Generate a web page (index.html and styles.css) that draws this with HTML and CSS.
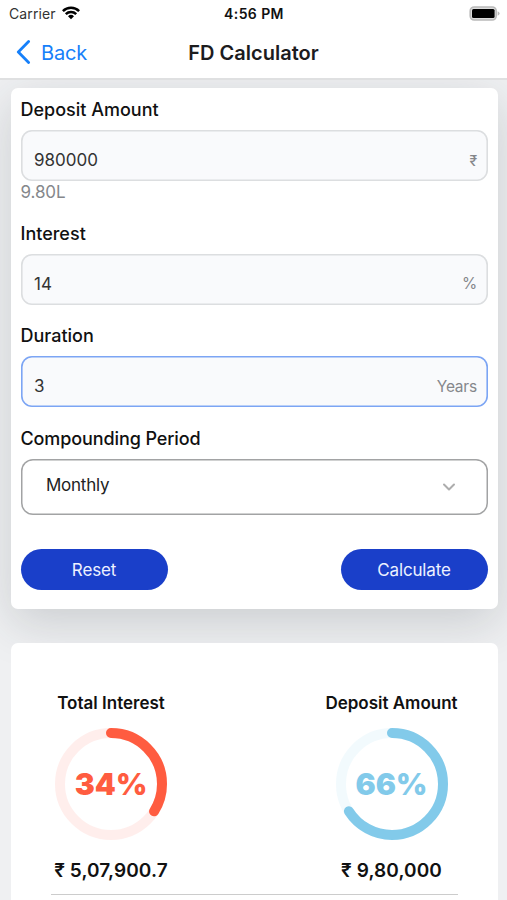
FILE: index.html
```html
<!DOCTYPE html>
<html lang="en">
<head>
<meta charset="utf-8">
<title>FD Calculator</title>
<link rel="stylesheet" href="styles.css">
</head>
<body>
<header class="top">
  <div class="status">
    <span class="carrier">Carrier
      <svg class="wifi" width="18" height="14" viewBox="0 0 18 14"><g fill="none" stroke="#000" stroke-width="2.5"><path d="M.9 5.1a11.5 11.5 0 0 1 16.2 0"/><path d="M3.8 8.2a7.4 7.4 0 0 1 10.4 0"/></g><path d="M6 10.3a4.3 4.3 0 0 1 6 0L9 13.3z"/></svg>
    </span>
    <span class="time">4:56 PM</span>
    <svg class="battery" width="31" height="15" viewBox="0 0 31 15"><rect x="1.2" y="1" width="26" height="13" rx="4" fill="#ddd" stroke="#b9b9b9" stroke-width="1.6"/><rect x="3" y="3" width="22.6" height="9" rx="1.5" fill="#000"/><path d="M28.6 5.2q2 .7 2 2.3t-2 2.3z" fill="#b9b9b9"/></svg>
  </div>
  <nav class="nav">
    <a class="back"><svg width="15" height="24" viewBox="0 0 15 24"><path d="M12.6 1.6 2.3 12l10.3 10.4" fill="none" stroke="#1680fa" stroke-width="2.8" stroke-linecap="round" stroke-linejoin="round"/></svg><span>Back</span></a>
    <h1 class="title">FD Calculator</h1>
  </nav>
</header>
<main class="page">
  <form class="card form">
    <label class="label">Deposit Amount</label>
    <div class="field"><span class="value">980000</span><span class="unit rupee">₹</span></div>
    <div class="hint">9.80L</div>
    <label class="label">Interest</label>
    <div class="field"><span class="value">14</span><span class="unit">%</span></div>
    <label class="label">Duration</label>
    <div class="field focused"><span class="value">3</span><span class="unit">Years</span></div>
    <label class="label period">Compounding Period</label>
    <div class="select"><span>Monthly</span><svg width="14" height="10" viewBox="0 0 14 10"><path d="m2 2.5 5 5 5-5" fill="none" stroke="#adadad" stroke-width="2" stroke-linecap="round" stroke-linejoin="round"/></svg></div>
    <div class="actions"><button type="button" class="btn">Reset</button><button type="button" class="btn">Calculate</button></div>
  </form>
  <section class="card results">
    <div class="stats">
      <div class="stat">
        <h2 class="stat-title">Total Interest</h2>
        <div class="ring interest">
          <svg width="112" height="112" viewBox="0 0 112 112"><circle class="track" cx="56" cy="56" r="51"/><circle class="arc" cx="56" cy="56" r="51" pathLength="100" stroke-dasharray="34 100" transform="rotate(-90 56 56)"/></svg>
          <span class="percent">34%</span>
        </div>
        <div class="amount">₹ 5,07,900.7</div>
      </div>
      <div class="stat">
        <h2 class="stat-title">Deposit Amount</h2>
        <div class="ring deposit">
          <svg width="112" height="112" viewBox="0 0 112 112"><circle class="track" cx="56" cy="56" r="51"/><circle class="arc" cx="56" cy="56" r="51" pathLength="100" stroke-dasharray="66 100" transform="rotate(-90 56 56)"/></svg>
          <span class="percent">66%</span>
        </div>
        <div class="amount">₹ 9,80,000</div>
      </div>
    </div>
  </section>
</main>
</body>
</html>
```
FILE: styles.css
```css
* { box-sizing: border-box; }
body {
  margin: 0;
  height: 900px;
  overflow: hidden;
  display: flex;
  flex-direction: column;
  background: #eff0f2;
  font-family: Inter, "Noto Sans", sans-serif;
  color: #111;
}
.top { height: 80px; flex: none; background: #fff; border-bottom: 2px solid #dfe0e1; position: relative; z-index: 1; }
.status { height: 27px; display: grid; grid-template-columns: 1fr auto 1fr; align-items: center; padding: 0 7px 0 9px; font-size: 14px; }
.carrier { display: flex; align-items: center; gap: 6px; color: #333; letter-spacing: .1px; }
.wifi { display: block; margin-top: -2px; }
.time { font-weight: 600; letter-spacing: .4px; margin-right: 1px; }
.battery { justify-self: end; margin-top: -1px; }
.nav { height: 51px; display: grid; grid-template-columns: 1fr auto 1fr; align-items: center; padding: 1px 16px 0; }
.back { display: flex; align-items: center; gap: 10px; color: #1680fa; font-size: 20px; letter-spacing: -.2px; }
.back svg { margin-top: -2px; }
.title { margin: 0; font-size: 20px; font-weight: 600; color: #1c1c1e; }
.page { flex: 1; min-height: 0; padding: 8.4px 9.5px 0 10.5px; }
.card { background: #fff; border-radius: 7px; }
.form { height: 521px; padding: 10px 10px 0; box-shadow: 0 14px 48px rgba(40, 48, 56, .18); display: flex; flex-direction: column; }
.label { height: 24px; line-height: 24px; margin-bottom: 8px; font-size: 18px; font-weight: 500; }
.period { letter-spacing: -.1px; }
.field { height: 51px; margin-bottom: 19.6px; box-shadow: inset 0 0 0 1.6px #dcdee0; border-radius: 11px; background: #f9fafc; padding: 9px 10.5px 0 13.5px; display: flex; align-items: center; justify-content: space-between; font-size: 17px; color: #333; }
.focused { box-shadow: inset 0 0 0 1.6px #7ca5f4; }
.unit { font-size: 15.5px; letter-spacing: -.2px; color: #85878b; }
.rupee { font-size: 14px; font-weight: 500; }
.hint { margin-top: -19.6px; height: 23px; line-height: 23px; font-size: 17px; letter-spacing: -.1px; color: #85878b; margin-bottom: 17.4px; }
.select { height: 56px; box-shadow: inset 0 0 0 1.5px #a2a3a4; border-radius: 12px; display: flex; align-items: center; justify-content: space-between; padding: 0 31.5px 3px 25.5px; font-size: 17px; letter-spacing: -.25px; color: #222; }
.select svg { margin-top: 3px; }
.actions { display: flex; justify-content: space-between; margin-top: 34px; }
.btn { width: 147px; height: 41px; border: 0; border-radius: 21px; background: #1a3fc9; color: #edf1ff; font: 400 17px Inter, sans-serif; letter-spacing: -.15px; padding: 1px 0 0; }
.results { margin-top: 34px; height: 300px; padding: 48px 39.5px 0 40px; }
.stats { height: 204px; border-bottom: 1px solid #ccc; display: flex; justify-content: space-between; }
.stat { width: 121px; display: flex; flex-direction: column; align-items: center; white-space: nowrap; }
.stat + .stat { width: 133px; }
.stat-title { margin: 0; font-size: 17px; line-height: 24px; font-weight: 600; }
.ring { display: grid; place-items: center; margin-top: 13px; }
.ring > * { grid-area: 1 / 1; }
.ring svg { display: block; }
.ring circle { fill: none; stroke: currentColor; stroke-width: 10; }
.ring .track { opacity: .1; }
.arc { stroke-linecap: round; }
.interest { color: #ff5c40; }
.deposit { color: #82caea; }
.percent { font-size: 30px; font-weight: 900; }
.amount { margin-top: 17.6px; font-size: 19px; line-height: 26px; font-weight: 600; letter-spacing: .1px; }
```
